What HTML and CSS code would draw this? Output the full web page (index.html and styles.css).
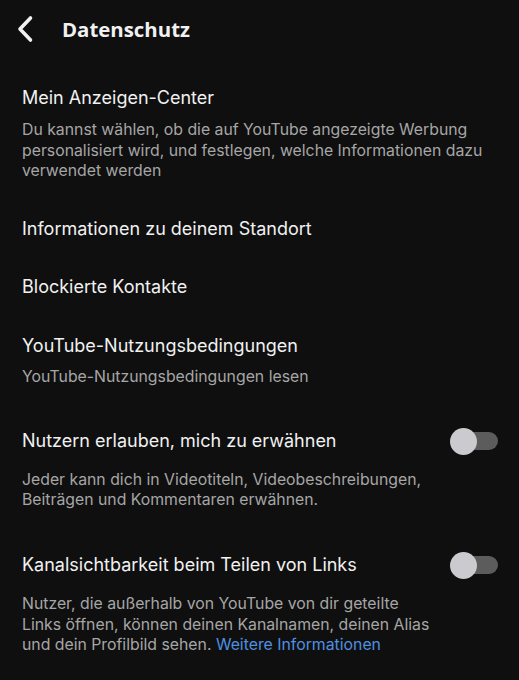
FILE: index.html
```html
<!DOCTYPE html>
<html lang="de">
<head>
<meta charset="utf-8">
<link rel="stylesheet" href="styles.css">
</head>
<body>
<div class="page">
  <header class="topbar">
    <svg class="back" width="18" height="28" viewBox="0 0 18 28" aria-hidden="true">
      <path d="M14.5 3 L4 14 L14.5 25" fill="none" stroke="#f1f1f1" stroke-width="3.6" stroke-linecap="round" stroke-linejoin="round"/>
    </svg>
    <h1 class="title">Datenschutz</h1>
  </header>
  <main class="list">
    <section class="item">
      <div class="item-title">Mein Anzeigen-Center</div>
      <p class="item-desc">Du kannst wählen, ob die auf YouTube angezeigte Werbung personalisiert wird, und festlegen, welche Informationen dazu verwendet werden</p>
    </section>
    <section class="item">
      <div class="item-title">Informationen zu deinem Standort</div>
    </section>
    <section class="item">
      <div class="item-title">Blockierte Kontakte</div>
    </section>
    <section class="item">
      <div class="item-title">YouTube-Nutzungsbedingungen</div>
      <p class="item-desc">YouTube-Nutzungsbedingungen lesen</p>
    </section>
    <section class="item toggle-item">
      <div class="toggle-row">
        <div class="item-title">Nutzern erlauben, mich zu erwähnen</div>
        <span class="toggle"><span class="knob"></span></span>
      </div>
      <p class="item-desc">Jeder kann dich in Videotiteln, Videobeschreibungen, Beiträgen und Kommentaren erwähnen.</p>
    </section>
    <section class="item toggle-item">
      <div class="toggle-row">
        <div class="item-title">Kanalsichtbarkeit beim Teilen von Links</div>
        <span class="toggle"><span class="knob"></span></span>
      </div>
      <p class="item-desc">Nutzer, die außerhalb von YouTube von dir geteilte Links öffnen, können deinen Kanalnamen, deinen Alias und dein Profilbild sehen. <a class="link" href="#">Weitere Informationen</a></p>
    </section>
  </main>
</div>
</body>
</html>
```

FILE: styles.css
```css
html, body {
  margin: 0;
  padding: 0;
  background: #0f0f0f;
}
body {
  font-family: Inter, "Noto Sans", sans-serif;
  color: #f1f1f1;
}
.page {
  width: 519px;
  min-height: 680px;
  background: #0f0f0f;
  overflow: hidden;
}
.topbar {
  height: 58px;
  display: flex;
  align-items: center;
  padding-left: 16px;
  box-sizing: border-box;
}
.back {
  display: block;
  flex: none;
}
.title {
  margin: 0 0 0 28px;
  font-family: "Open Sans", sans-serif;
  font-weight: 700;
  font-size: 20.4px;
  color: #f1f1f1;
  letter-spacing: 0;
}
.list {
  padding: 11px 22px 0 22px;
}
.item {
  padding: 17.25px 0;
}
.item-title {
  font-size: 18px;
  line-height: 24px;
  color: #f1f1f1;
}
.item-desc {
  margin: 9.5px 0 0 0;
  font-size: 15.8px;
  line-height: 20.8px;
  color: #a6a6a6;
}
.toggle-item {
  padding: 22px 0 18px 0;
}
.toggle-row {
  display: flex;
  align-items: center;
  justify-content: space-between;
  height: 28px;
}
.toggle-item .item-desc {
  margin-top: 14.5px;
  padding-right: 58px;
}
.toggle {
  position: relative;
  width: 48px;
  height: 28px;
  flex: none;
  margin-right: -1px;
}
.toggle::before {
  content: "";
  position: absolute;
  left: 6px;
  top: 5px;
  width: 42px;
  height: 18px;
  border-radius: 9px;
  background: #5c5c5c;
}
.knob {
  position: absolute;
  left: 0;
  top: 0.5px;
  width: 27px;
  height: 27px;
  border-radius: 50%;
  background: #cacacf;
}
.link {
  color: #4f8fe0;
  text-decoration: none;
}
```
